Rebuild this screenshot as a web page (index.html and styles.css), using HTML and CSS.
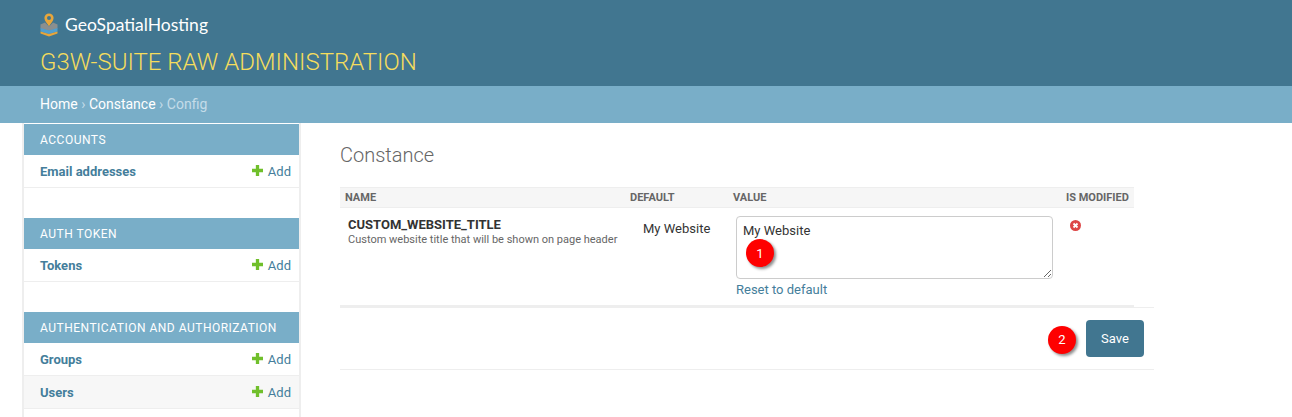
FILE: index.html
```html
<!DOCTYPE html>
<html lang="en">
<head>
<meta charset="utf-8">
<title>Constance | G3W-SUITE</title>
<link rel="stylesheet" href="styles.css">
</head>
<body>
<header class="header">
  <div class="logo">
    <svg class="logo-icon" width="18" height="24" viewBox="0 0 18 24" aria-hidden="true">
      <path d="M9 0.5a4.6 4.6 0 0 0-4.6 4.6c0 3 3 5.4 4.6 8.4 1.6-3 4.600-5.400 4.600-8.400A4.600 4.600 0 0 0 9 0.500z" fill="#e8a63a"/>
      <circle cx="9" cy="5" r="2" fill="#417690"/>
      <path d="M0.500 11.500 5 9.500 9 13.500 13 9.500 17.500 11.500V15.500L9 18 0.500 15.500z" fill="#8a8f8f"/>
      <path d="M0.500 15 9 17.500 17.500 15V18.500L9 21 0.500 18.500z" fill="#4f9fd0"/>
      <path d="M0.500 18.500 9 21 17.500 18.500V20.500L9 23.500 0.500 20.500z" fill="#e8a63a"/>
    </svg>
    <span class="logo-text">GeoSpatialHosting</span>
  </div>
  <div class="site-title">G3W-SUITE RAW ADMINISTRATION</div>
</header>
<nav class="breadcrumbs"><a href="#">Home</a> <span class="sep">›</span> <a href="#">Constance</a> <span class="sep">›</span> <span class="current">Config</span></nav>
<div class="layout">
  <aside class="sidebar">
    <section class="module">
      <h2 class="caption">Accounts</h2>
      <div class="row"><a class="model" href="#">Email addresses</a><a class="add" href="#"><svg class="plus" width="11" height="11" viewBox="0 0 10 10"><path d="M3.500 0h3v3.500H10v3H6.500V10h-3V6.500H0v-3h3.500z"/></svg>Add</a></div>
    </section>
    <section class="module">
      <h2 class="caption">Auth Token</h2>
      <div class="row"><a class="model" href="#">Tokens</a><a class="add" href="#"><svg class="plus" width="11" height="11" viewBox="0 0 10 10"><path d="M3.500 0h3v3.500H10v3H6.500V10h-3V6.500H0v-3h3.500z"/></svg>Add</a></div>
    </section>
    <section class="module">
      <h2 class="caption">Authentication and Authorization</h2>
      <div class="row"><a class="model" href="#">Groups</a><a class="add" href="#"><svg class="plus" width="11" height="11" viewBox="0 0 10 10"><path d="M3.500 0h3v3.500H10v3H6.500V10h-3V6.500H0v-3h3.500z"/></svg>Add</a></div>
      <div class="row alt"><a class="model" href="#">Users</a><a class="add" href="#"><svg class="plus" width="11" height="11" viewBox="0 0 10 10"><path d="M3.500 0h3v3.500H10v3H6.500V10h-3V6.500H0v-3h3.500z"/></svg>Add</a></div>
    </section>
  </aside>
  <main class="content">
    <h1 class="page-title">Constance</h1>
    <form class="form">
      <table class="config">
        <thead>
          <tr><th class="c-name">Name</th><th class="c-default">Default</th><th class="c-value">Value</th><th class="c-mod">Is modified</th></tr>
        </thead>
        <tbody>
          <tr>
            <td class="td-name"><strong class="key">CUSTOM_WEBSITE_TITLE</strong><span class="help">Custom website title that will be shown on page header</span></td>
            <td class="td-default">My Website</td>
            <td class="td-value">
              <div class="field">
                <textarea class="input">My Website</textarea>
                <span class="marker marker-one">1</span>
              </div>
              <a class="reset" href="#">Reset to default</a>
            </td>
            <td class="td-mod">
              <svg width="11" height="11" viewBox="0 0 11 11" aria-label="False"><circle cx="5.500" cy="5.500" r="5.500" fill="#dd4646"/><path d="M3.500 3.500l4 4m0-4l-4 4" stroke="#fff" stroke-width="1.800" fill="none"/></svg>
            </td>
          </tr>
        </tbody>
      </table>
      <div class="submit-row">
        <span class="save-wrap"><span class="marker marker-two">2</span><button class="save" type="button">Save</button></span>
      </div>
    </form>
  </main>
</div>
</body>
</html>
```
FILE: styles.css
```css
* { box-sizing: border-box; }
html, body { margin: 0; padding: 0; height: 100%; overflow: hidden; }
body { font-family: Roboto, "Liberation Sans", sans-serif; font-size: 14px; color: #333; background: #fff; }
a { color: #447e9b; text-decoration: none; }

.header { height: 86px; background: #417690; padding: 13px 40px 0; }
.logo { display: flex; align-items: center; height: 24px; gap: 7px; }
.logo-icon { flex: none; }
.logo-text { font-family: Lato, sans-serif; font-size: 17.500px; color: #fff; line-height: 24px; }
.site-title { margin-top: 10px; font-size: 24px; font-weight: 300; line-height: 30px; color: #f5dd5d; }

.breadcrumbs { height: 37px; background: #79aec8; padding: 0 40px; line-height: 36px; font-size: 14px; color: #c4dce8; white-space: pre-wrap; }
.breadcrumbs a { color: #fff; }
.breadcrumbs .sep { font-size: 14px; }

.layout { display: flex; align-items: flex-start; }
.sidebar { flex: none; width: 279px; margin: 0 0 0 22px; height: 294px; border-left: 2px solid #eee; border-right: 2px solid #eee; padding-top: 1px; }
.module { margin-bottom: 30px; }
.module:last-child { margin-bottom: 0; }
.caption { margin: 0; height: 31px; background: #79aec8; color: #fff; padding: 1px 16px 0; font-size: 12px; font-weight: 400; line-height: 30px; letter-spacing: 0.5px; text-transform: uppercase; }
.row { display: flex; justify-content: space-between; align-items: center; height: 33px; padding: 0 8px 0 16px; border-bottom: 1px solid #eee; font-size: 13px; }
.row.alt { background: #f7f7f7; }
.model { font-weight: 700; }
.add { display: flex; align-items: center; gap: 5px; }
.plus { fill: #70bf2b; margin-top: -2px; }

.content { flex: none; width: 814px; margin-left: 39px; }
.page-title { margin: 21px 0 21px; font-size: 20px; font-weight: 300; line-height: 22px; color: #666; }
.form { margin: 0; }
.config { width: 794px; table-layout: fixed; border-collapse: collapse; }
.config th { height: 20px; padding: 0 5px; background: #f6f6f6; border-top: 1px solid #eee; border-bottom: 1px solid #eee; color: #666; font-size: 11px; font-weight: 700; text-align: left; text-transform: uppercase; }
.c-name { width: 285px; }
.c-default { width: 103px; }
.c-value { width: 333px; }
.c-mod { width: 73px; }
.config td { vertical-align: top; padding: 0; }
.config tbody tr { height: 98px; border-bottom: 2px solid #eee; }
.td-name { padding: 9px 0 0 8px !important; }
.key { display: block; font-size: 13px; font-weight: 700; line-height: 15px; color: #333; }
.help { display: block; font-size: 11px; line-height: 14px; color: #666; margin-top: 1px; white-space: nowrap; }
.td-default { padding: 13px 0 0 18px !important; font-size: 13px; line-height: 15px; }
.td-value { padding: 8px 0 0 8px !important; }
.field { position: relative; width: 317px; height: 63px; }
.input { display: block; width: 317px; height: 63px; margin: 0; padding: 6px 6px; border: 1px solid #ccc; border-radius: 4px; font-family: Roboto, sans-serif; font-size: 13px; line-height: 15px; color: #333; background: #fff; }
.reset { display: block; margin-top: 3px; font-size: 13px; line-height: 15px; }
.td-mod { padding: 10px 0 0 9px !important; }

.submit-row { display: flex; justify-content: flex-end; height: 63px; padding: 12px 10px 0 0; border-top: 1px solid #eee; border-bottom: 1px solid #eee; }
.save-wrap { position: relative; display: block; height: 37px; }
.save { display: block; width: 58px; height: 37px; padding: 0; border: 0; border-radius: 4px; background: #417690; color: #fff; font-family: Roboto, sans-serif; font-size: 13px; }
.marker { position: absolute; display: flex; align-items: center; justify-content: center; width: 28px; height: 28px; border-radius: 50%; background: #fe0000; color: #fff; font-size: 13px; box-shadow: 2px 2px 3px rgba(0, 0, 0, 0.45); }
.marker-one { left: 10px; top: 23px; }
.marker-two { left: -38px; top: 6px; }
```
